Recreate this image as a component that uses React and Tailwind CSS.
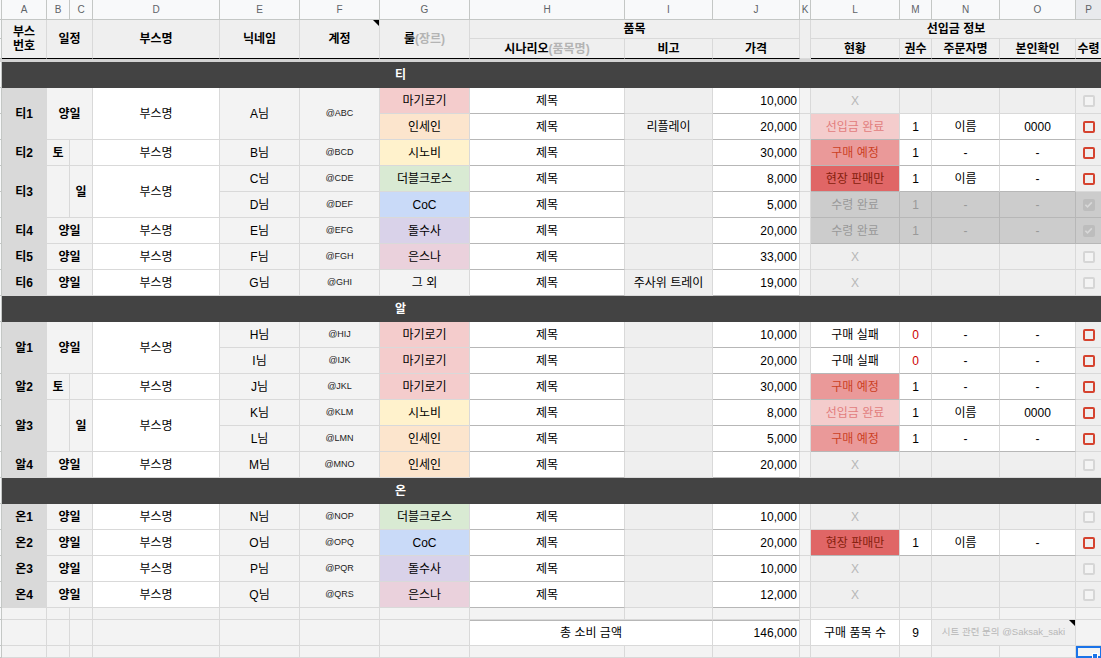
import React from 'react';

const CS = ['', 'col-start-1', 'col-start-2', 'col-start-3', 'col-start-4', 'col-start-5', 'col-start-6', 'col-start-7', 'col-start-8', 'col-start-9', 'col-start-10', 'col-start-11', 'col-start-12', 'col-start-13', 'col-start-14', 'col-start-15', 'col-start-16', 'col-start-17'];
const RS = ['', 'row-start-1', 'row-start-2', 'row-start-3', 'row-start-4', 'row-start-5', 'row-start-6', 'row-start-7', 'row-start-8', 'row-start-9', 'row-start-10', 'row-start-11', 'row-start-12', 'row-start-13', 'row-start-14', 'row-start-15', 'row-start-16', 'row-start-17', 'row-start-18', 'row-start-19', 'row-start-20', 'row-start-21', 'row-start-22', 'row-start-23', 'row-start-24', 'row-start-25', 'row-start-26', 'row-start-27', 'row-start-28'];
const CSPAN = { 1: '', 2: 'col-span-2', 3: 'col-span-3', 5: 'col-span-5', 6: 'col-span-6', 7: 'col-span-7', 10: 'col-span-10', 17: 'col-span-17' };
const RSPAN = { 1: '', 2: 'row-span-2' };

function C({ r, c, rs = 1, cs = 1, cls = '', bc = 'border-[#d9d9d9]', justify = 'justify-center', noBorder = false, children }) {
  return (
    <div
      className={`${CS[c]} ${RS[r]} ${RSPAN[rs]} ${CSPAN[cs]} relative flex items-center ${justify} whitespace-nowrap overflow-hidden ${noBorder ? '' : 'border-r border-b'} ${bc} ${cls}`}
    >
      {children}
    </div>
  );
}

const GENRE = {
  '마기로기': 'bg-[#f4cccc]',
  '인세인': 'bg-[#fce5cd]',
  '시노비': 'bg-[#fff2cc]',
  '더블크로스': 'bg-[#d9ead3]',
  'CoC': 'bg-[#c9daf8]',
  '돌수사': 'bg-[#d9d2e9]',
  '은스나': 'bg-[#ead1dc]',
  '그 외': 'bg-[#f3f3f3]',
};

const STATUS = {
  'X': 'bg-[#efefef] text-[#b7b7b7]',
  '선입금 완료': 'bg-[#f4cccc] text-[#e27d7d]',
  '구매 예정': 'bg-[#ea9999] text-[#cc4125]',
  '현장 판매만': 'bg-[#e06666] text-[#85200c]',
  '수령 완료': 'bg-[#cccccc] text-[#999999]',
  '구매 실패': 'bg-white text-black',
};

const items = [
  { r: 6, g: '마기로기', j: '10,000', l: 'X' },
  { r: 7, g: '인세인', i: '리플레이', j: '20,000', l: '선입금 완료', m: '1', n: '이름', o: '0000' },
  { r: 8, g: '시노비', j: '30,000', l: '구매 예정', m: '1', n: '-', o: '-' },
  { r: 9, g: '더블크로스', j: '8,000', l: '현장 판매만', m: '1', n: '이름', o: '-' },
  { r: 10, g: 'CoC', j: '5,000', l: '수령 완료', m: '1', n: '-', o: '-' },
  { r: 11, g: '돌수사', j: '20,000', l: '수령 완료', m: '1', n: '-', o: '-' },
  { r: 12, g: '은스나', j: '33,000', l: 'X' },
  { r: 13, g: '그 외', i: '주사위 트레이', j: '19,000', l: 'X' },
  { r: 15, g: '마기로기', j: '10,000', l: '구매 실패', m: '0', n: '-', o: '-' },
  { r: 16, g: '마기로기', j: '20,000', l: '구매 실패', m: '0', n: '-', o: '-' },
  { r: 17, g: '마기로기', j: '30,000', l: '구매 예정', m: '1', n: '-', o: '-' },
  { r: 18, g: '시노비', j: '8,000', l: '선입금 완료', m: '1', n: '이름', o: '0000' },
  { r: 19, g: '인세인', j: '5,000', l: '구매 예정', m: '1', n: '-', o: '-' },
  { r: 20, g: '인세인', j: '20,000', l: 'X' },
  { r: 22, g: '더블크로스', j: '10,000', l: 'X' },
  { r: 23, g: 'CoC', j: '20,000', l: '현장 판매만', m: '1', n: '이름', o: '-' },
  { r: 24, g: '돌수사', j: '10,000', l: 'X' },
  { r: 25, g: '은스나', j: '12,000', l: 'X' },
];

const booths = [
  { a: '티1', r: 6, rs: 2, s: '양일', ef: [['A님', '@ABC']] },
  { a: '티2', r: 8, rs: 1, s: '토', ef: [['B님', '@BCD']] },
  { a: '티3', r: 9, rs: 2, s: '일', ef: [['C님', '@CDE'], ['D님', '@DEF']] },
  { a: '티4', r: 11, rs: 1, s: '양일', ef: [['E님', '@EFG']] },
  { a: '티5', r: 12, rs: 1, s: '양일', ef: [['F님', '@FGH']] },
  { a: '티6', r: 13, rs: 1, s: '양일', ef: [['G님', '@GHI']] },
  { a: '알1', r: 15, rs: 2, s: '양일', ef: [['H님', '@HIJ'], ['I님', '@IJK']] },
  { a: '알2', r: 17, rs: 1, s: '토', ef: [['J님', '@JKL']] },
  { a: '알3', r: 18, rs: 2, s: '일', ef: [['K님', '@KLM'], ['L님', '@LMN']] },
  { a: '알4', r: 20, rs: 1, s: '양일', ef: [['M님', '@MNO']] },
  { a: '온1', r: 22, rs: 1, s: '양일', ef: [['N님', '@NOP']] },
  { a: '온2', r: 23, rs: 1, s: '양일', ef: [['O님', '@OPQ']] },
  { a: '온3', r: 24, rs: 1, s: '양일', ef: [['P님', '@PQR']] },
  { a: '온4', r: 25, rs: 1, s: '양일', ef: [['Q님', '@QRS']] },
];

function Box({ type }) {
  if (type === 'red')
    return <div className="w-[12px] h-[12px] rounded-[2px] border-2 border-[#d5432f]" />;
  if (type === 'grey')
    return <div className="w-[12px] h-[12px] rounded-[2px] border-2 border-[#d6d6d6] bg-[#f4f4f4]" />;
  return (
    <div className="w-[12px] h-[12px] rounded-[2px] bg-[#bdbdbd] flex items-center justify-center">
      <svg viewBox="0 0 12 12" className="w-[11px] h-[11px]">
        <path d="M2.6 6.2 L4.9 8.5 L9.6 3.7" stroke="#d8d8d8" strokeWidth="1.7" fill="none" />
      </svg>
    </div>
  );
}

const Tri = () => (
  <div className="absolute top-0 right-0 w-0 h-0 border-l-[6px] border-l-transparent border-t-[6px] border-t-black" />
);

export default function App() {
  const cells = [];
  const add = (r, c, opts = {}) => cells.push(<C key={`${r}-${c}`} r={r} c={c} {...opts} />);

  // corner + row headers
  add(1, 1, { cls: 'bg-[#f8f9fa]', bc: 'border-[#c4c7c5]' });
  for (let r = 2; r <= 28; r++) {
    if (r === 4) continue;
    add(r, 1, { cls: 'bg-[#f8f9fa]', bc: 'border-[#c4c7c5]' });
  }

  // column letters
  'ABCDEFGHIJKLMNOP'.split('').forEach((L, i) => {
    add(1, i + 2, {
      cls: `${L === 'P' ? 'bg-[#e8eaed]' : 'bg-[#f8f9fa]'} text-[10px] text-[#5f6368]`,
      bc: 'border-[#c4c7c5]',
      children: L,
    });
  });

  // headers
  const H = 'bg-[#efefef] font-bold text-[12px] text-black';
  const HB = 'border-[#d9d9d9] border-b-black';
  add(2, 2, { rs: 2, cls: `${H} leading-[14px] text-center`, bc: HB, children: <span>부스<br />번호</span> });
  add(2, 3, { rs: 2, cs: 2, cls: H, bc: HB, children: '일정' });
  add(2, 5, { rs: 2, cls: H, bc: HB, children: '부스명' });
  add(2, 6, { rs: 2, cls: H, bc: HB, children: '닉네임' });
  add(2, 7, { rs: 2, cls: H, bc: HB, children: <>계정<Tri /></> });
  add(2, 8, { rs: 2, cls: H, bc: HB, children: <>룰<span className="text-[#b4b4b4]">(장르)</span></> });
  add(2, 9, { cs: 3, cls: H, children: '품목' });
  add(3, 9, { cls: H, bc: HB, children: <>시나리오<span className="text-[#b4b4b4]">(품목명)</span></> });
  add(3, 10, { cls: H, bc: HB, children: '비고' });
  add(3, 11, { cls: H, bc: HB, children: '가격' });
  add(2, 12, { rs: 2, cls: 'bg-[#efefef]' });
  add(2, 13, { cs: 5, cls: H, children: '선입금 정보' });
  add(3, 13, { cls: H, bc: HB, children: '현황' });
  add(3, 14, { cls: H, bc: HB, children: '권수' });
  add(3, 15, { cls: H, bc: HB, children: '주문자명' });
  add(3, 16, { cls: H, bc: HB, children: '본인확인' });
  add(3, 17, { cls: H, bc: HB, children: '수령' });

  // frozen divider
  add(4, 1, { cs: 17, cls: 'bg-[#d3d3d3]', noBorder: true });

  // section bars
  [[5, '티'], [14, '알'], [21, '온']].forEach(([r, t]) => {
    add(r, 2, { cs: 10, cls: 'bg-[#434343] text-white font-bold text-[12px]', bc: 'border-[#434343]', children: t });
    add(r, 12, { cs: 6, cls: 'bg-[#434343]', bc: 'border-[#434343]' });
  });

  // booths (left part)
  booths.forEach((b) => {
    add(b.r, 2, { rs: b.rs, cls: 'bg-[#d9d9d9] font-bold text-[12px]', children: b.a });
    if (b.s === '양일') {
      add(b.r, 3, { rs: b.rs, cs: 2, cls: 'bg-[#f3f3f3] font-bold text-[12px]', children: '양일' });
    } else if (b.s === '토') {
      add(b.r, 3, { rs: b.rs, cls: 'bg-[#f3f3f3] font-bold text-[12px]', children: '토' });
      add(b.r, 4, { rs: b.rs, cls: 'bg-[#f3f3f3]' });
    } else {
      add(b.r, 3, { rs: b.rs, cls: 'bg-[#f3f3f3]' });
      add(b.r, 4, { rs: b.rs, cls: 'bg-[#f3f3f3] font-bold text-[12px]', children: '일' });
    }
    add(b.r, 5, { rs: b.rs, cls: 'bg-white text-[12px]', children: '부스명' });
    if (b.ef.length === 1) {
      add(b.r, 6, { rs: b.rs, cls: 'bg-[#f3f3f3] text-[12px]', children: b.ef[0][0] });
      add(b.r, 7, { rs: b.rs, cls: 'bg-[#f3f3f3] text-[9px] text-[#222]', children: b.ef[0][1] });
    } else {
      b.ef.forEach(([e, f], k) => {
        add(b.r + k, 6, { cls: 'bg-[#f3f3f3] text-[12px]', children: e });
        add(b.r + k, 7, { cls: 'bg-[#f3f3f3] text-[9px] text-[#222]', children: f });
      });
    }
  });

  // item part
  items.forEach((it) => {
    const received = it.l === '수령 완료';
    const x = it.l === 'X';
    add(it.r, 8, { cls: `${GENRE[it.g]} text-[12px]`, children: it.g });
    add(it.r, 9, { cls: 'bg-white text-[12px]', bc: 'border-[#d9d9d9] border-b-[#b7b7b7]', children: '제목' });
    add(it.r, 10, { cls: 'bg-[#efefef] text-[12px]', children: it.i || '' });
    add(it.r, 11, { cls: 'bg-white text-[12px] pr-[2px]', bc: 'border-[#d9d9d9] border-b-[#b7b7b7]', justify: 'justify-end', children: it.j });
    add(it.r, 12, { cls: 'bg-[#f3f3f3]' });
    const rowBg = received ? 'bg-[#cccccc] text-[#999999]' : x ? 'bg-[#efefef]' : 'bg-white';
    const rowBc = received ? 'border-[#b7b7b7]' : x ? 'border-[#d9d9d9]' : 'border-[#d9d9d9] border-b-[#b7b7b7]';
    add(it.r, 13, { cls: `${STATUS[it.l]} text-[12px]`, bc: rowBc, children: it.l });
    add(it.r, 14, { cls: `${rowBg} text-[12px] ${it.m === '0' ? 'text-[#cc0000]' : ''}`, bc: rowBc, children: it.m || '' });
    add(it.r, 15, { cls: `${rowBg} text-[12px]`, bc: rowBc, children: it.n || '' });
    add(it.r, 16, { cls: `${rowBg} text-[12px]`, bc: rowBc, children: it.o || '' });
    add(it.r, 17, {
      cls: received ? 'bg-[#cccccc]' : 'bg-[#efefef]',
      bc: received ? 'border-[#b7b7b7]' : 'border-[#d9d9d9]',
      children: <Box type={received ? 'check' : x ? 'grey' : 'red'} />,
    });
  });

  // bottom rows
  for (let c = 2; c <= 17; c++) {
    add(26, c, { cls: 'bg-[#f3f3f3]' });
  }
  for (let c = 2; c <= 8; c++) add(27, c, { cls: 'bg-[#f3f3f3]' });
  add(27, 9, { cs: 2, cls: 'bg-white text-[12px]', bc: 'border-[#d9d9d9] border-t border-t-[#b7b7b7]', children: '총 소비 금액' });
  add(27, 11, { cls: 'bg-white text-[12px] pr-[2px]', bc: 'border-[#d9d9d9] border-t border-t-[#b7b7b7]', justify: 'justify-end', children: '146,000' });
  add(27, 12, { cls: 'bg-[#f3f3f3]' });
  add(27, 13, { cls: 'bg-white text-[12px]', children: '구매 품목 수' });
  add(27, 14, { cls: 'bg-white text-[12px]', children: '9' });
  add(27, 15, { cs: 2, cls: 'bg-[#efefef] text-[9.5px] text-[#b7b7b7]', children: <>시트 관련 문의 @Saksak_saki<Tri /></> });
  add(27, 17, { cls: 'bg-[#f3f3f3]' });
  for (let c = 2; c <= 16; c++) add(28, c, { cls: 'bg-[#f3f3f3]' });

  return (
    <div className="w-[1101px] h-[658px] overflow-hidden bg-white font-['Liberation_Sans','Noto_Sans_CJK_KR',sans-serif] text-black">
      <div className="relative grid grid-cols-[2px_45px_23px_23px_127px_80px_80px_90px_155px_88px_87px_11px_89px_32px_68px_76px_26px] grid-rows-[20px_19px_20px_3px_repeat(21,26px)_12px_26px_12px]">
        {cells}
        <div className="col-start-17 row-start-28 relative bg-[#f3f3f3] border-2 border-[#1a73e8] overflow-visible">
          <div className="absolute right-[2px] bottom-[-3px] w-[6px] h-[6px] bg-[#1a73e8] border border-white" />
        </div>
      </div>
    </div>
  );
}
